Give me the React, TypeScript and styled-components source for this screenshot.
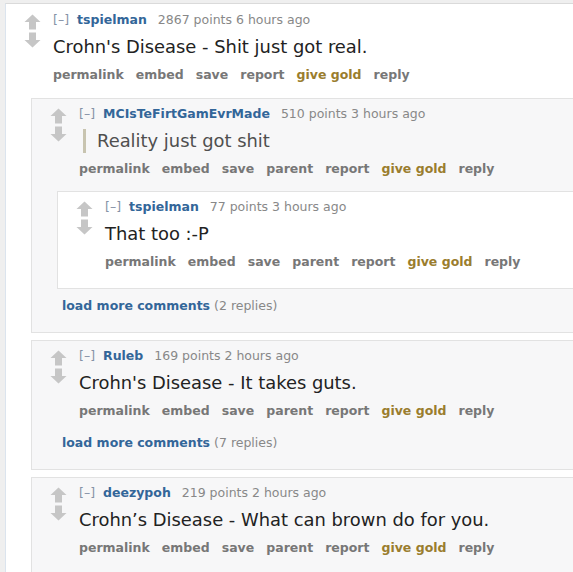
import React from "react";
import styled, { createGlobalStyle, css } from "styled-components";

const GlobalStyle = createGlobalStyle`
  html, body {
    margin: 0;
    padding: 0;
    background: #efefef;
    overflow: hidden;
  }
  body {
    font-family: Verdana, "DejaVu Sans", sans-serif;
  }
`;

const Page = styled.div`
  width: 640px;
  padding: 3px 0 0 5px;
`;

type Variant = "top" | "odd" | "even";

const Box = styled.div<{ $variant: Variant }>`
  box-sizing: border-box;
  padding: ${(p) => (p.$variant === "top" ? "6px 0 40px 0" : "5px 0 16px 0")};
  ${(p) =>
    p.$variant === "top"
      ? css`
          background: #ffffff;
          border-top: 1px solid #dadada;
          border-left: 1px solid #dbe4ee;
        `
      : p.$variant === "odd"
      ? css`
          background: #f7f7f8;
          border: 1px solid #e2e2e2;
        `
      : css`
          background: #ffffff;
          border: 1px solid #e2e2e2;
        `}
`;

const Row = styled.div`
  display: flex;
  align-items: flex-start;
  padding-left: 18px;
`;

const Arrows = styled.div`
  display: flex;
  flex-direction: column;
  gap: 2px;
  width: 17px;
  margin-top: 4px;
  margin-right: 12px;
  flex-shrink: 0;
`;

const Entry = styled.div`
  flex: 1;
  min-width: 0;
`;

const Tagline = styled.div`
  font-size: 12.5px;
  line-height: 20px;
  color: #888888;
  white-space: nowrap;
`;

const Expand = styled.span`
  color: #8592a6;
  margin-right: 8px;
`;

const Author = styled.span`
  color: #336699;
  font-weight: bold;
  margin-right: 11px;
`;

const Body = styled.div`
  margin-top: 5px;
  font-size: 17.9px;
  line-height: 24px;
  color: #222222;
  white-space: nowrap;
`;

const Quote = styled.div`
  margin-left: 4px;
  padding-left: 11px;
  border-left: 3px solid #c8c4b0;
  color: #4f4f4f;
`;

const Buttons = styled.ul`
  display: flex;
  gap: 12px;
  list-style: none;
  margin: 6px 0 0 0;
  padding: 0;
  font-size: 12.5px;
  line-height: 20px;
  font-weight: bold;
  white-space: nowrap;
`;

const Button = styled.li<{ $gold?: boolean }>`
  color: ${(p) => (p.$gold ? "#9a7d2e" : "#777777")};
`;

const Children = styled.div<{ $top?: boolean }>`
  display: flex;
  flex-direction: column;
  gap: 7px;
  margin: ${(p) => (p.$top ? "13px" : "12px")} 0 0 25px;
`;

const More = styled.div`
  margin-left: 5px;
  font-size: 12.5px;
  line-height: 20px;
  color: #888888;
  white-space: nowrap;
`;

const MoreLink = styled.span`
  color: #336699;
  font-weight: bold;
  margin-right: 4px;
`;

const ArrowSvg: React.FC<{ down?: boolean }> = ({ down }) => (
  <svg width="17" height="16" viewBox="0 0 17 16">
    <path
      d="M8.5 0.5 L16.5 8 L12 8 L12 15.5 L5 15.5 L5 8 L0.5 8 Z"
      fill="#c6c6c6"
      transform={down ? "rotate(180 8.5 8)" : undefined}
    />
  </svg>
);

type CommentData = {
  author: string;
  points: string;
  time: string;
  body: string;
  quote?: boolean;
  parent?: boolean;
  variant: Variant;
  more?: string;
  children?: CommentData[];
};

const Comment: React.FC<{ c: CommentData }> = ({ c }) => {
  const buttons = ["permalink", "embed", "save"];
  if (c.parent) buttons.push("parent");
  buttons.push("report");
  return (
    <Box $variant={c.variant}>
      <Row>
        <Arrows>
          <ArrowSvg />
          <ArrowSvg down />
        </Arrows>
        <Entry>
          <Tagline>
            <Expand>[–]</Expand>
            <Author>{c.author}</Author>
            {c.points} points {c.time}
          </Tagline>
          <Body>{c.quote ? <Quote>{c.body}</Quote> : c.body}</Body>
          <Buttons>
            {buttons.map((b) => (
              <Button key={b}>{b}</Button>
            ))}
            <Button $gold>give gold</Button>
            <Button>reply</Button>
          </Buttons>
        </Entry>
      </Row>
      {(c.children || c.more) && (
        <Children $top={c.variant === "top"}>
          {c.children?.map((ch, i) => (
            <Comment key={i} c={ch} />
          ))}
          {c.more && (
            <More>
              <MoreLink>load more comments</MoreLink>({c.more})
            </More>
          )}
        </Children>
      )}
    </Box>
  );
};

const thread: CommentData = {
  author: "tspielman",
  points: "2867",
  time: "6 hours ago",
  body: "Crohn's Disease - Shit just got real.",
  variant: "top",
  children: [
    {
      author: "MCIsTeFirtGamEvrMade",
      points: "510",
      time: "3 hours ago",
      body: "Reality just got shit",
      quote: true,
      parent: true,
      variant: "odd",
      more: "2 replies",
      children: [
        {
          author: "tspielman",
          points: "77",
          time: "3 hours ago",
          body: "That too :-P",
          parent: true,
          variant: "even",
        },
      ],
    },
    {
      author: "Ruleb",
      points: "169",
      time: "2 hours ago",
      body: "Crohn's Disease - It takes guts.",
      parent: true,
      variant: "odd",
      more: "7 replies",
    },
    {
      author: "deezypoh",
      points: "219",
      time: "2 hours ago",
      body: "Crohn’s Disease - What can brown do for you.",
      parent: true,
      variant: "odd",
    },
  ],
};

export default function App() {
  return (
    <>
      <GlobalStyle />
      <Page>
        <Comment c={thread} />
      </Page>
    </>
  );
}
